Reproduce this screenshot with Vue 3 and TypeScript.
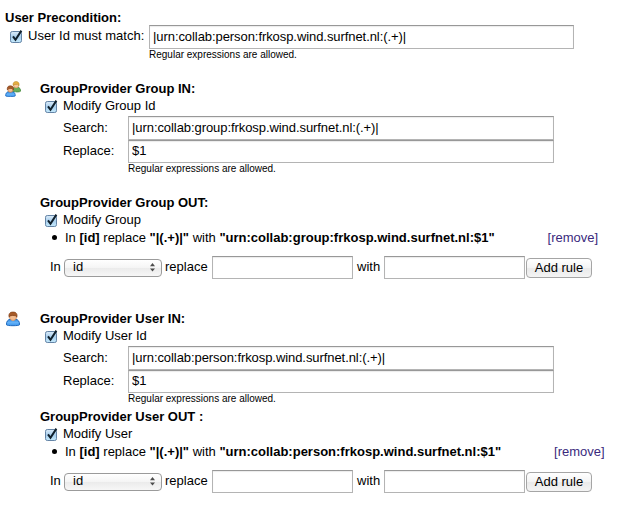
<script setup lang="ts">
import { reactive } from 'vue'

interface ProviderSection {
  key: string
  icon: 'group' | 'user'
  inTitle: string
  inLabel: string
  inEnabled: boolean
  search: string
  replace: string
  outTitle: string
  outLabel: string
  outEnabled: boolean
  rule: { field: string; from: string; to: string }
}

const note = 'Regular expressions are allowed.'
const precondition = reactive({ enabled: true, pattern: '|urn:collab:person:frkosp.wind.surfnet.nl:(.+)|' })

const sections = reactive<ProviderSection[]>([
  {
    key: 'group',
    icon: 'group',
    inTitle: 'GroupProvider Group IN:',
    inLabel: 'Modify Group Id',
    inEnabled: true,
    search: '|urn:collab:group:frkosp.wind.surfnet.nl:(.+)|',
    replace: '$1',
    outTitle: 'GroupProvider Group OUT:',
    outLabel: 'Modify Group',
    outEnabled: true,
    rule: { field: '[id]', from: '"|(.+)|"', to: '"urn:collab:group:frkosp.wind.surfnet.nl:$1"' },
  },
  {
    key: 'user',
    icon: 'user',
    inTitle: 'GroupProvider User IN:',
    inLabel: 'Modify User Id',
    inEnabled: true,
    search: '|urn:collab:person:frkosp.wind.surfnet.nl:(.+)|',
    replace: '$1',
    outTitle: 'GroupProvider User OUT :',
    outLabel: 'Modify User',
    outEnabled: true,
    rule: { field: '[id]', from: '"|(.+)|"', to: '"urn:collab:person:frkosp.wind.surfnet.nl:$1"' },
  },
])
</script>

<template>
  <svg class="defs" width="0" height="0" aria-hidden="true">
    <defs>
      <linearGradient id="shirt" x1="0" y1="0" x2="0" y2="1">
        <stop offset="0" stop-color="#2f86dc" />
        <stop offset="0.5" stop-color="#64b2f8" />
        <stop offset="1" stop-color="#3c96ee" />
      </linearGradient>
      <symbol id="person" viewBox="0 0 16 16">
        <path d="M1.5 13.8C1.2 10.5 3 8.6 5.2 8.2h5.6c2.2.4 4 2.3 3.7 5.6-.8 1.2-12.2 1.2-13 0z" fill="url(#shirt)" stroke="#1d68bd" />
        <path d="M5.6 8.4 8 10.2l2.4-1.8z" fill="#d7ecff" />
        <path d="M4.6 4.5h6.8v1.8C11.4 8.3 9.8 9.4 8 9.4S4.6 8.3 4.6 6.3z" fill="#f3bd91" stroke="#c27d4b" stroke-width=".7" />
        <path d="M4.1 6.2C3.3 3 4.7 1 8 1s4.7 2 3.9 5.2l-1-1.4-3.4-.4-2.4.5z" fill="#a65a28" stroke="#7d3c15" stroke-width=".6" />
      </symbol>
      <symbol id="people" viewBox="0 0 16 16">
        <path d="M6.8 10.5c0-2.5 1.2-4 3-4.3h3c1.8.3 3 1.8 2.7 4-.7.9-4.9 1-5.7.3z" fill="#69ad5a" stroke="#438938" stroke-width=".8" />
        <circle cx="11.1" cy="4.3" r="2.6" fill="#f6c79b" stroke="#c98c4d" stroke-width=".6" />
        <path d="M8.1 4.4C7.7 2 9 .6 11.1.6S14.5 2 14 4.6l-1.4-1.3-2.6.1z" fill="#e6b345" stroke="#bd8427" stroke-width=".6" />
        <path d="M.7 15c-.3-2.5 1-4 2.8-4.4h4c1.8.4 3 1.9 2.7 4.4-.7.8-8.8.8-9.5 0z" fill="url(#shirt)" stroke="#1d68bd" stroke-width=".8" />
        <circle cx="5.4" cy="8.7" r="2.6" fill="#f3bd91" stroke="#b9713d" stroke-width=".6" />
        <path d="M2.4 9C1.8 6.3 3.1 4.8 5.4 4.8S9 6.3 8.4 9L7 7.5l-3.2.1z" fill="#a65a28" stroke="#7d3c15" stroke-width=".6" />
      </symbol>
      <linearGradient id="box" x1="0" y1="0" x2="0" y2="1">
        <stop offset="0" stop-color="#dcecf9" />
        <stop offset="0.5" stop-color="#a9cfee" />
        <stop offset="1" stop-color="#c5eafc" />
      </linearGradient>
      <symbol id="tick" viewBox="0 0 14 14">
        <rect x="1.5" y="1.5" width="11" height="11" rx="1.8" fill="url(#box)" stroke="#6484a6" />
        <path d="M4 6.4 6.5 9.8 12.4.6" fill="none" stroke="#10202c" stroke-width="2" />
      </symbol>
    </defs>
  </svg>

  <main class="page">
    <section class="precondition">
      <h2 class="title">User Precondition:</h2>
      <div class="match-row">
        <svg v-if="precondition.enabled" class="check"><use href="#tick" /></svg>
        <span class="match-label">User Id must match:</span>
        <input v-model="precondition.pattern" class="field field-match" type="text" />
      </div>
      <p class="note note-match">{{ note }}</p>
    </section>

    <section v-for="s in sections" :key="s.key" :class="['provider', s.key]">
      <svg class="avatar"><use :href="s.icon === 'group' ? '#people' : '#person'" /></svg>
      <div class="body">
        <h2 class="title">{{ s.inTitle }}</h2>
        <div class="check-row">
          <svg v-if="s.inEnabled" class="check"><use href="#tick" /></svg>
          <span>{{ s.inLabel }}</span>
        </div>
        <div class="pair">
          <span class="pair-label">Search:</span>
          <input v-model="s.search" class="field field-wide" type="text" />
          <span class="pair-label">Replace:</span>
          <input v-model="s.replace" class="field field-wide" type="text" />
        </div>
        <p class="note note-pair">{{ note }}</p>

        <h2 class="title out-title">{{ s.outTitle }}</h2>
        <div class="check-row">
          <svg v-if="s.outEnabled" class="check"><use href="#tick" /></svg>
          <span>{{ s.outLabel }}</span>
        </div>
        <div class="rule">
          <i class="bullet"></i>
          <span class="rule-text">In <b>{{ s.rule.field }}</b> replace <b>{{ s.rule.from }}</b> with <b>{{ s.rule.to }}</b></span>
          <a class="remove">[remove]</a>
        </div>
        <div class="new-rule">
          <span class="word-in">In</span>
          <div class="select">
            <span>id</span>
            <svg class="arrows" viewBox="0 0 5 9"><path d="M2.5 0 5 3.2H0zM0 5.4h5L2.5 8.6z" fill="#4c4c4c" /></svg>
          </div>
          <span class="word-replace">replace</span>
          <input class="field field-rule" type="text" />
          <span class="word-with">with</span>
          <input class="field field-rule" type="text" />
          <button class="add" type="button">Add rule</button>
        </div>
      </div>
    </section>
  </main>
</template>

<style>
body {
  background: #fff;
}
</style>

<style scoped>
.defs {
  position: absolute;
}
.page {
  box-sizing: border-box;
  width: 629px;
  height: 511px;
  padding-top: 9px;
  overflow: hidden;
  background: #fff;
  color: #000;
  font: 13px/17px 'Liberation Sans', Arial, sans-serif;
  white-space: nowrap;
}
.title {
  margin: 0;
  height: 17px;
  font-size: 13px;
  font-weight: bold;
}
.precondition {
  padding-left: 5px;
  height: 71px;
}
.match-row {
  display: flex;
  align-items: center;
  height: 24px;
  padding-left: 4px;
  margin-top: -1px;
}
.check {
  flex: none;
  width: 14px;
  height: 14px;
}
.match-label {
  width: 121px;
  margin-left: 5px;
  line-height: 20px;
  padding-bottom: 3px;
}
.field {
  box-sizing: border-box;
  display: block;
  flex: none;
  height: 24px;
  margin: 0;
  padding: 0 3px 2px;
  border: 1px solid #b4b4b4;
  border-top-color: #989898;
  border-radius: 0;
  outline: 0;
  background: #fff;
  box-shadow: inset 0 1px 1px #ececec;
  color: #000;
  font: inherit;
  letter-spacing: -0.07px;
}
.field-match {
  width: 425px;
}
.field-wide {
  width: 426px;
}
.note {
  margin: 0;
  height: 12px;
  font-size: 10px;
  line-height: 12px;
}
.note-match {
  padding-left: 144px;
}
.note-pair {
  padding-left: 88px;
}
.provider {
  display: flex;
}
.provider.user {
  margin-top: 31px;
}
.avatar {
  flex: none;
  width: 16px;
  height: 16px;
  margin: 1px 19px 0 5px;
}
.body {
  flex: 1;
}
.check-row {
  display: flex;
  align-items: flex-start;
  gap: 5px;
  height: 17px;
  padding-left: 4px;
}
.check-row .check {
  margin-top: 3px;
}
.pair {
  display: grid;
  grid-template-columns: 65px 426px;
  grid-template-rows: 24px 23px;
  align-items: center;
  padding: 2px 0 0 23px;
}
.pair .field:last-child {
  height: 23px;
}
.pair-label {
  padding-bottom: 2px;
}
.out-title {
  margin-top: 19px;
}
.user .out-title {
  margin-top: 3px;
}
.rule {
  display: flex;
  align-items: center;
  height: 17px;
  margin-top: 1px;
  padding-left: 12px;
}
.bullet {
  width: 5px;
  height: 5px;
  margin-right: 8px;
  border-radius: 50%;
  background: #000;
}
.remove {
  margin-left: 53px;
  color: #3a2a7d;
}
.new-rule {
  display: flex;
  align-items: center;
  height: 23px;
  margin-top: 10px;
  padding-left: 10px;
}
.word-in,
.word-replace,
.word-with {
  padding-bottom: 2px;
}
.word-in {
  width: 14px;
}
.select {
  box-sizing: border-box;
  display: flex;
  align-items: center;
  justify-content: space-between;
  width: 98px;
  height: 18px;
  padding: 0 6px 0 8px;
  border: 1px solid #9b9b9b;
  border-radius: 4px;
  background: linear-gradient(#fff, #f5f5f5 48%, #ebebeb 52%, #f7f7f7);
}
.select span {
  padding-bottom: 2px;
}
.arrows {
  width: 5px;
  height: 9px;
}
.word-replace {
  width: 47px;
  margin-left: 3px;
}
.field-rule {
  width: 141px;
  height: 23px;
}
.word-with {
  width: 27px;
  margin-left: 4px;
}
.add {
  box-sizing: border-box;
  width: 66px;
  height: 20px;
  margin-left: 1px;
  padding: 0 0 2px;
  border: 1px solid #a5a5a5;
  border-radius: 4px;
  background: linear-gradient(#fff, #f4f4f4 48%, #eaeaea 52%, #f4f4f4);
  color: #000;
  font: inherit;
}
</style>
